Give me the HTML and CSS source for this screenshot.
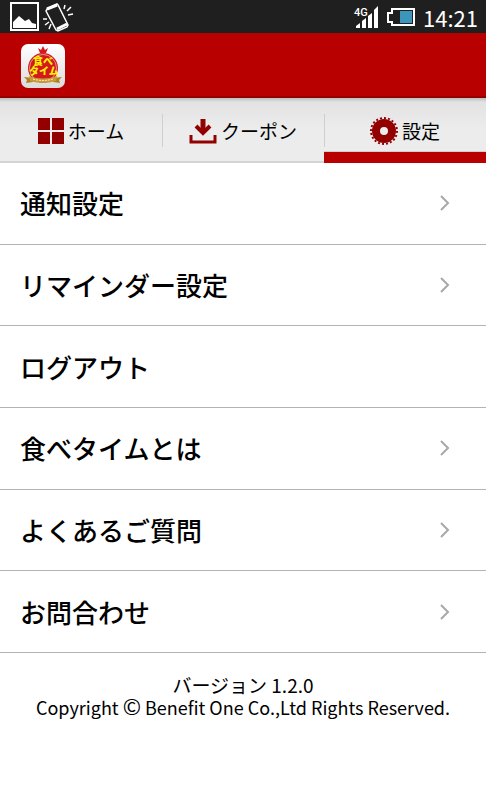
FILE: index.html
```
<!DOCTYPE html>
<html lang="ja">
<head>
    <meta charset="UTF-8">
    <meta name="viewport" content="width=device-width, initial-scale=1.0">
    <title>設定</title>
    <link rel="stylesheet" href="styles.css">
</head>
<body>
    <div class="status-bar">
        <div class="status-left">
            <svg width="30" height="30" viewBox="0 0 30 30">
                <rect x="1" y="1" width="27" height="27" fill="none" stroke="#fff" stroke-width="2"/>
                <path d="M3 26v-6l6-6 6 5 4-2 3 4 4 1v4z" fill="#fff"/>
            </svg>
            <svg width="32" height="30" viewBox="0 0 32 30">
                <path d="M5 7l10-5 1 1 10 20-1 2-9 4-2-1L4 9z" fill="none" stroke="#fff" stroke-width="1.500"/>
                <path d="M5 7l10-4M15 27l10-5" stroke="#fff" stroke-width="3"/>
                <path d="M22 7l1-4M25 9l4-4M26 13l5-1M9 22l-2 5M7 20l-4 3M5 17H1" stroke="#fff" stroke-width="1.500"/>
            </svg>
        </div>
        <div class="status-right">
            <svg width="26" height="26" viewBox="0 0 26 26">
                <text x="1" y="12" class="network-text">4G</text>
                <path d="M3 24v-2l4-3v5zM9 24v-7l4-3v10zM15 24V12l4-3v15zM21 24V6l4-4v22z" fill="#fff"/>
            </svg>
            <svg width="28" height="18" viewBox="0 0 28 18">
                <path d="M5 1h22v16H5v-3H1V5h4z" fill="none" stroke="#fff" stroke-width="2"/>
                <path d="M13 3h12v12H13z" fill="#3c95bb"/>
            </svg>
            <span class="clock">14:21</span>
        </div>
    </div>

    <header>
        <svg class="logo" width="44" height="44" viewBox="0 0 44 44" role="img" aria-label="食べタイム">
            <defs>
                <linearGradient id="logo-bg" x1="0" y1="0" x2="0" y2="1">
                    <stop offset="0" stop-color="#fff"/>
                    <stop offset="1" stop-color="#dcdcdc"/>
                </linearGradient>
            </defs>
            <rect width="44" height="44" rx="7" fill="url(#logo-bg)"/>
            <path d="M19 9l-2-5 3 2 2-4 2 4 3-2-2 5z" fill="#d41820"/>
            <circle cx="22" cy="24" r="15" fill="#d41820"/>
            <circle cx="22" cy="24" r="13.500" fill="none" stroke="#efe4c0" stroke-width=".6"/>
            <text x="12" y="21" class="logo-text">食べ</text>
            <text x="8" y="31" class="logo-text">タイム</text>
            <path d="M3 33l9 1v4l-7 1 1-3zM41 33l-9 1v4l7 1-1-3z" fill="#ad8221"/>
            <path d="M8 32q14 5 28 0l-1 5q-13 4-26 0z" fill="#c99b36"/>
            <path d="M12 35q10 3 20 0" fill="none" stroke="#fff0b5" stroke-dasharray="2 1"/>
        </svg>
    </header>

    <nav class="tabs">
        <a href="#home" class="tab">
            <svg width="26" height="26" viewBox="0 0 26 26">
                <path d="M0 0h12v12H0zM14 0h12v12H14zM0 14h12v12H0zM14 14h12v12H14z" fill="#930000"/>
            </svg>
            <span>ホーム</span>
        </a>
        <a href="#coupon" class="tab">
            <svg width="28" height="26" viewBox="0 0 28 26">
                <path d="M14 1v12" fill="none" stroke="#930000" stroke-width="5"/>
                <path d="M7 8l7 7 7-7" fill="none" stroke="#930000" stroke-width="4"/>
                <path d="M2 17v7h24v-7" fill="none" stroke="#930000" stroke-width="3"/>
            </svg>
            <span>クーポン</span>
        </a>
        <a href="#settings" class="tab active">
            <svg width="28" height="28" viewBox="0 0 28 28">
                <circle cx="14" cy="14" r="8" fill="none" stroke="#930000" stroke-width="8"/>
                <circle cx="14" cy="14" r="13" fill="none" stroke="#930000" stroke-width="2" pathLength="80" stroke-dasharray="2 2"/>
            </svg>
            <span>設定</span>
        </a>
    </nav>

    <main>
        <ul class="menu">
            <li><a href="#notice">通知設定<svg class="arrow" width="10" height="18" viewBox="0 0 10 18"><path d="M1 2l7 7-7 7"/></svg></a></li>
            <li><a href="#reminder">リマインダー設定<svg class="arrow" width="10" height="18" viewBox="0 0 10 18"><path d="M1 2l7 7-7 7"/></svg></a></li>
            <li><a href="#logout">ログアウト</a></li>
            <li><a href="#about">食べタイムとは<svg class="arrow" width="10" height="18" viewBox="0 0 10 18"><path d="M1 2l7 7-7 7"/></svg></a></li>
            <li><a href="#faq">よくあるご質問<svg class="arrow" width="10" height="18" viewBox="0 0 10 18"><path d="M1 2l7 7-7 7"/></svg></a></li>
            <li><a href="#contact">お問合わせ<svg class="arrow" width="10" height="18" viewBox="0 0 10 18"><path d="M1 2l7 7-7 7"/></svg></a></li>
        </ul>
    </main>

    <footer>
        <p>バージョン 1.2.0</p>
        <p class="copyright">Copyright <span class="mark">©</span> Benefit One Co.,Ltd Rights Reserved.</p>
    </footer>
</body>
</html>
```

FILE: styles.css
```
* {
    box-sizing: border-box;
}
body {
    margin: 0;
    background-color: #ffffff;
    color: #000000;
    font-family: "Noto Sans CJK JP", sans-serif;
}
a {
    color: inherit;
    text-decoration: none;
}
svg {
    flex-shrink: 0;
}

/* status bar */
.status-bar {
    display: flex;
    justify-content: space-between;
    align-items: center;
    height: 33px;
    padding: 0 8px 0 10px;
    background-color: #1f1f1f;
    color: #ffffff;
}
.status-left {
    display: flex;
    gap: 2px;
}
.status-right {
    display: flex;
    align-items: center;
    gap: 8px;
}
.network-text {
    font-family: Roboto, sans-serif;
    font-size: 11px;
    font-weight: 500;
    fill: #ffffff;
}
.clock {
    font-size: 22px;
    line-height: 32px;
}

header {
    display: flex;
    align-items: center;
    height: 65px;
    padding: 0 21px;
    background-color: #b80000;
    border-bottom: 2px solid #930000;
}
.logo {
    margin-top: 2px;
}
.logo-text {
    font-size: 10px;
    font-weight: 900;
    fill: #fff200;
}

/* tabs */
.tabs {
    display: grid;
    grid-template-columns: repeat(3, 1fr);
    height: 65px;
    background: linear-gradient(#bdbdbd, #e2e2e2 4px, #ececec 30px);
    border-bottom: 2px solid #d4d4d4;
}
.tab {
    position: relative;
    display: flex;
    justify-content: center;
    align-items: center;
    gap: 4px;
    padding-top: 2px;
    font-size: 19px;
    line-height: 28px;
}
.tab + .tab::before {
    content: "";
    position: absolute;
    left: 0;
    top: 16px;
    width: 1px;
    height: 33px;
    background-color: #cfcfcf;
}
.tab.active::after {
    content: "";
    position: absolute;
    left: 0;
    right: 0;
    bottom: -2px;
    height: 11px;
    background-color: #b80000;
    border-top: 1px solid #cfcfcf;
}

/* settings list */
.menu {
    display: grid;
    grid-auto-rows: 1fr;
    min-height: 490px;
    margin: 0;
    padding: 0;
    list-style: none;
}
.menu li {
    border-bottom: 1px solid #b3b3b3;
}
.menu a {
    display: flex;
    justify-content: space-between;
    align-items: center;
    height: 100%;
    padding: 0 36px 0 20px;
    font-size: 26px;
    line-height: 38px;
    font-weight: 500;
}
.arrow {
    fill: none;
    stroke: #a8a8a8;
    stroke-width: 2;
}

footer {
    padding: 21px 10px;
    text-align: center;
}
footer p {
    margin: 0;
    font-size: 19px;
    line-height: 22px;
}
footer .copyright {
    font-size: 18px;
}
.mark {
    font-size: 22px;
    line-height: 18px;
}
```
